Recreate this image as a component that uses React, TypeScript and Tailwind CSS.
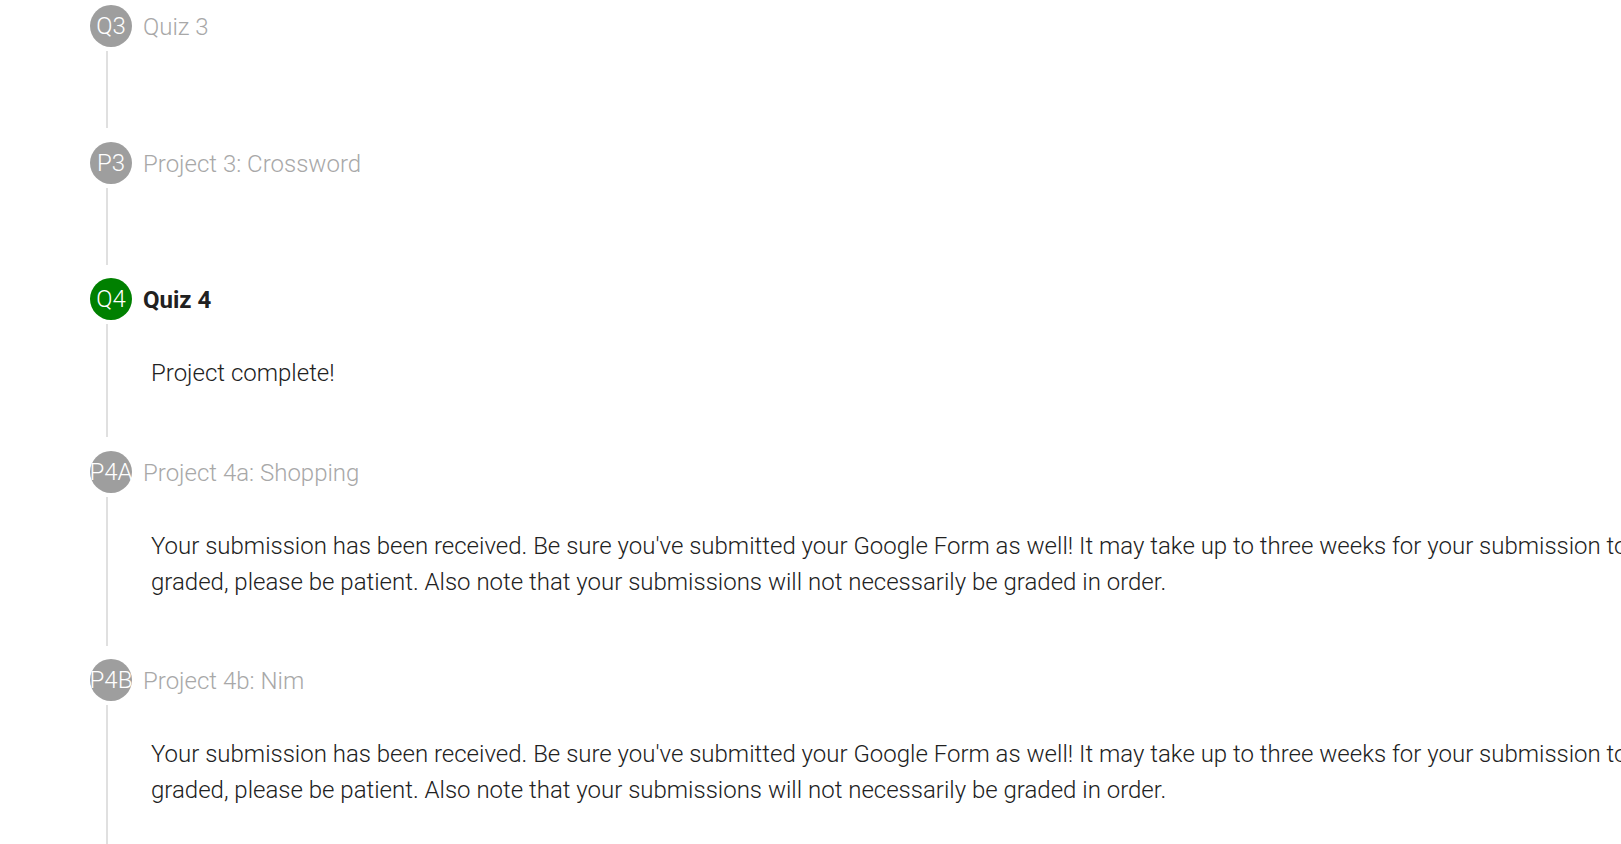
import React from "react";

type Step = {
  code: string;
  label: string;
  active?: boolean;
  body?: string;
  last?: boolean;
};

const SUBMITTED =
  "Your submission has been received. Be sure you've submitted your Google Form as well! It may take up to three weeks for your submission to be graded, please be patient. Also note that your submissions will not necessarily be graded in order.";

const steps: Step[] = [
  { code: "Q3", label: "Quiz 3" },
  { code: "P3", label: "Project 3: Crossword" },
  { code: "Q4", label: "Quiz 4", active: true, body: "Project complete!" },
  { code: "P4A", label: "Project 4a: Shopping", body: SUBMITTED },
  { code: "P4B", label: "Project 4b: Nim", body: SUBMITTED, last: true },
];

function StepRow({ step }: { step: Step }) {
  return (
    <div className="flex flex-col">
      <div className="flex items-center h-[42px]">
        <div
          className={
            step.active
              ? "w-[42px] h-[42px] rounded-full bg-[#008000] flex items-center justify-center shrink-0 text-white text-[24px] font-light leading-none whitespace-nowrap"
              : "w-[42px] h-[42px] rounded-full bg-[#9e9e9e] flex items-center justify-center shrink-0 text-white text-[24px] font-light leading-none whitespace-nowrap"
          }
        >
          {step.code}
        </div>
        <div
          className={
            step.active
              ? "ml-[11px] mt-[2px] text-[24px] font-bold text-[#212121] whitespace-nowrap"
              : "ml-[11px] mt-[2px] text-[24px] font-light text-[#a8a8a8] whitespace-nowrap"
          }
        >
          {step.label}
        </div>
      </div>
      <div
        className={
          step.last
            ? "mt-[4px] ml-[16px] border-l-2 border-[#e0e0e0] pl-[43px] pt-[31px] pb-[60px]"
            : "mt-[4px] mb-[13.5px] ml-[16px] border-l-2 border-[#e0e0e0] pl-[43px] pt-[31px] pb-[46px]"
        }
      >
        {step.body ? (
          <p className="w-[1550px] text-[24px] leading-[36px] font-light text-[#212121]">
            {step.body}
          </p>
        ) : null}
      </div>
    </div>
  );
}

export default function App() {
  return (
    <div
      className="w-screen h-[844px] overflow-hidden bg-white"
      style={{ fontFamily: "Roboto, 'Noto Sans', sans-serif" }}
    >
      <div className="pl-[90px] pt-[5px] flex flex-col">
        {steps.map((s) => (
          <StepRow key={s.code} step={s} />
        ))}
      </div>
    </div>
  );
}
